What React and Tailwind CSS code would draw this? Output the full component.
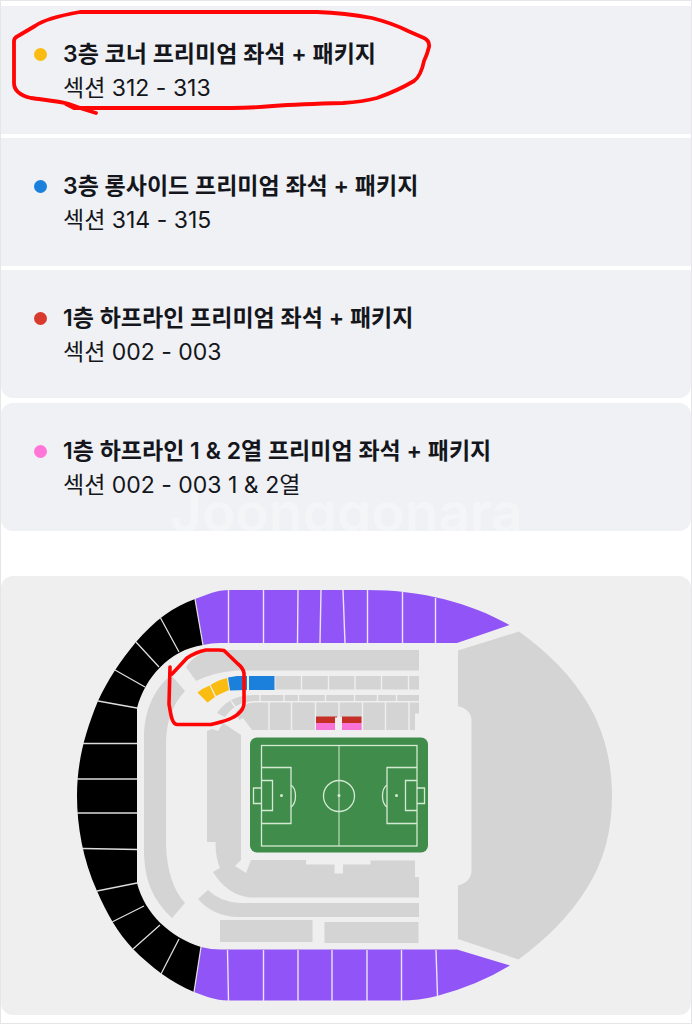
const seats = [
  { dot: 'bg-[#fbbc12]', title: '3층 코너 프리미엄 좌석 + 패키지', section: '섹션 312 - 313', shape: '' },
  { dot: 'bg-[#1a80dc]', title: '3층 롱사이드 프리미엄 좌석 + 패키지', section: '섹션 314 - 315', shape: '' },
  { dot: 'bg-[#d93a2e]', title: '1층 하프라인 프리미엄 좌석 + 패키지', section: '섹션 002 - 003', shape: 'rounded-b-xl' },
]

const halfLine = {
  dot: 'bg-[#ff76d8]',
  title: '1층 하프라인 1 & 2열 프리미엄 좌석 + 패키지',
  section: '섹션 002 - 003 1 & 2열',
  shape: 'rounded-xl',
}

function SeatRow({ seat, children }) {
  return (
    <li className={`relative flex gap-4 bg-[#f0f1f4] px-[33px] pt-[31px] pb-[29px] ${seat.shape}`}>
      <span className={`mt-[11px] size-[13px] shrink-0 rounded-full ${seat.dot}`} />
      <div className="relative z-10 text-[#14161c]">
        <h2 className="text-[23px] leading-[34px] font-semibold">{seat.title}</h2>
        <p className="text-[23px] leading-[34px]">{seat.section}</p>
      </div>
      {children}
    </li>
  )
}

function Pitch() {
  return (
    <g>
      <rect x="250" y="737.5" width="178" height="115" rx="7" fill="#3f8c4b" />
      <g fill="none" stroke="#d5ead2" strokeWidth="1.3">
        <rect x="261.5" y="745.5" width="155.5" height="100.5" />
        <path d="M339 745.5V846" strokeWidth="1" />
        <circle cx="339" cy="796" r="15.5" />
        <path d="M261.500 767.500H291V823.500H261.500M261.500 780.500H272.500V810.500H261.500M261.500 788H253.500V803.500H261.500" />
        <path d="M417 767.500H387V823.500H417M417 780.500H405.500V810.500H417M417 788H424.500V803.500H417" />
        <path d="M291 785C297 789 297 803 291 807M387 785C381 789 381 803 387 807" />
      </g>
      <g fill="#d5ead2">
        <circle cx="339" cy="795.5" r="1.5" />
        <circle cx="281.500" cy="795.5" r="1.5" />
        <circle cx="396.500" cy="795.5" r="1.5" />
      </g>
    </g>
  )
}

function StadiumMap() {
  return (
    <svg viewBox="1 576 690 439" className="block w-full" role="img" aria-label="좌석 배치도">
      {/* upper tier */}
      <path
        d="M195 599C173 607 155 620 136 642C121 660 107 681 98 701C83 737 77 766 77 796C77 826 83 860 97 891C107 914 118 933 133 949C151 967 172 983 194 992L201 947C170 937 145 914 137 883V708C145 678 169 650 203 645Z"
        fill="#000"
      />
      <path d="M195 599C206 595 216 590 230 590H367C423 590 470 603 509.500 625L457 643H220Q211 643 203 645Z" fill="#9155f7" />
      <path d="M201 947Q211 949.500 221 949.500H457L510 965.500Q478 985 437 996Q419 1000.500 400 1000.500H228C215 1000.500 205 996 194 992Z" fill="#9155f7" />
      <path
        d="M195 599L203 645M160 617L179 652M136 642L159 667M115 670L145 687M98 701L137 708M83 743.500H137M77 779H137M77 813H137M83 848.500L137 849.500M97 891L137 883M112 922L144 906M133 949L160 925M161 974L179 939M194 992L201 947"
        stroke="#dcdcdc"
        strokeWidth="1.3"
      />
      <path
        d="M228.500 590V643M263.500 590V643M298 590L297.500 643M321 590L320 643M343 590L345 643M367.500 590V643M402.500 592V643M435.500 598V643M227.500 950L228.500 1001M263.500 950V1001M298 950V1001M332 950V1001M367 950V1001M401.500 950V1001M436 950L437.500 996"
        stroke="#ebe2fb"
        strokeWidth="1.4"
      />

      {/* closed stands */}
      <g fill="#d4d4d4">
        <path d="M458 650.500L519 631.500C548 652 572 677 587 702C604 730 612 762 612 796C612 831 604 861 587 888C570 916 545 940 518.500 959.500L458 939V885.500C466 884 471.500 878 471.500 871V720C471.500 713 466 708 458 706Z" />
        <path d="M171 675L185 691C172 705 166 722 166 745V845C167 870 173 890 185 903L172 918C153 900 144 880 144 850V738C144 712 153 690 171 675Z" />
        <path d="M186 667Q195 653 214 650H419V670.500H237Q214 672 196 681Z" />
        <path d="M275.500 676H419V689.500H275.500Z" />
        <path d="M217 713C222 706 232 695 254 695H419V701H254Q235 702 225 717Z" />
        <path d="M236 712Q243 702.500 255 702.500H419V713.500H415V730H252L243 718L239 720Z" />
        <path d="M207 731L212 729L218 731L223 723L241 735V860L235 866L246 873L251 860H306V864.500H334.500V873.500H343V864.500H370.500V860.500H415V877H419V897.500H250Q227 895 213 872L220 868Q215.500 858 215.500 842H207Z" />
        <path d="M198 899L208 890Q220 902 240 903H419V917H237Q213 916 198 899Z" />
        <path d="M220 920H312.500V942H220ZM324.500 922H418.500V943H324.500Z" />
      </g>
      <path
        d="M301.500 675V691M328.500 675V691M355 675V691M381.500 675V691M408.500 675V691M231 701L236 708M260 694V702M284 694V702M298.500 694V702M325.500 694V702M354.500 694V702M377.500 694V702M396.500 694V702M269 702V731M291.500 702V731M315.500 702V731M339 702V717M362.500 702V731M385.500 702V731M409 702V731"
        stroke="#efefef"
        strokeWidth="1.4"
      />

      {/* packages on sale */}
      <path d="M197.500 692.500Q203 688 209.500 685.500L215 697L207.500 702.500ZM210.500 685Q218 680 227 678L229 690L216 696Z" fill="#fbbc12" />
      <path d="M228 677.500L237 676H247V690L230 690.500ZM249 676H274.500V690H249Z" fill="#1a80dc" />
      <rect x="335" y="717" width="7" height="14" fill="#efefef" />
      <path d="M316 716.500H337V717.500H335V723H316ZM342 716.500H361.500V723H342Z" fill="#c62f25" />
      <path d="M316 723H335V730H316ZM342 723H361.500V730H342Z" fill="#f973d6" />

      <Pitch />

      <path
        d="M170 667L169 704C171 716 172 724 177 724.500H211C222 722 233 719 238 714Q244 709 244 703V673Q243 668 238 664L224 650.500Q222 650 219 650H206Q196 652 187 658L172 674"
        fill="none"
        stroke="#ff0505"
        strokeWidth="3.6"
        strokeLinecap="round"
        strokeLinejoin="round"
      />
    </svg>
  )
}

function App() {
  return (
    <main className="relative border border-[#e6e6e8] bg-white pt-[5px] pb-2 font-['Inter','Noto_Sans_CJK_KR',sans-serif]">
      <ul className="flex flex-col gap-1">
        {seats.map((seat) => (
          <SeatRow key={seat.title} seat={seat} />
        ))}
      </ul>
      <ul className="mt-[5px]">
        <SeatRow seat={halfLine}>
          <span aria-hidden="true" className="absolute top-[82px] left-[169px] text-[55px] leading-[55px] font-semibold text-white/30">
            Joonggonara
          </span>
        </SeatRow>
      </ul>
      <section className="mt-[45px] overflow-hidden rounded-xl bg-[#efefef]">
        <StadiumMap />
      </section>

      {/* hand-drawn marker around the first option */}
      <svg viewBox="1 1 439 119" className="pointer-events-none absolute top-0 left-0 z-20 w-[439px]" aria-hidden="true">
        <path
          d="M96 113L83 109L69 104C58 101 45 100 31 98Q14 94 14 83V41Q14 38 18 36L35 26Q46 18 80 12H317Q345 13 372 18Q392 23 408 31L424 38Q430 41 429 47Q427 55 424 61Q421 76 414 81Q397 91 377 98Q362 102 343 103Q300 104 273 106Q250 108 232 108H74L66 104"
          fill="none"
          stroke="#ff0505"
          strokeWidth="3.8"
          strokeLinecap="round"
          strokeLinejoin="round"
        />
      </svg>
    </main>
  )
}

export default App
